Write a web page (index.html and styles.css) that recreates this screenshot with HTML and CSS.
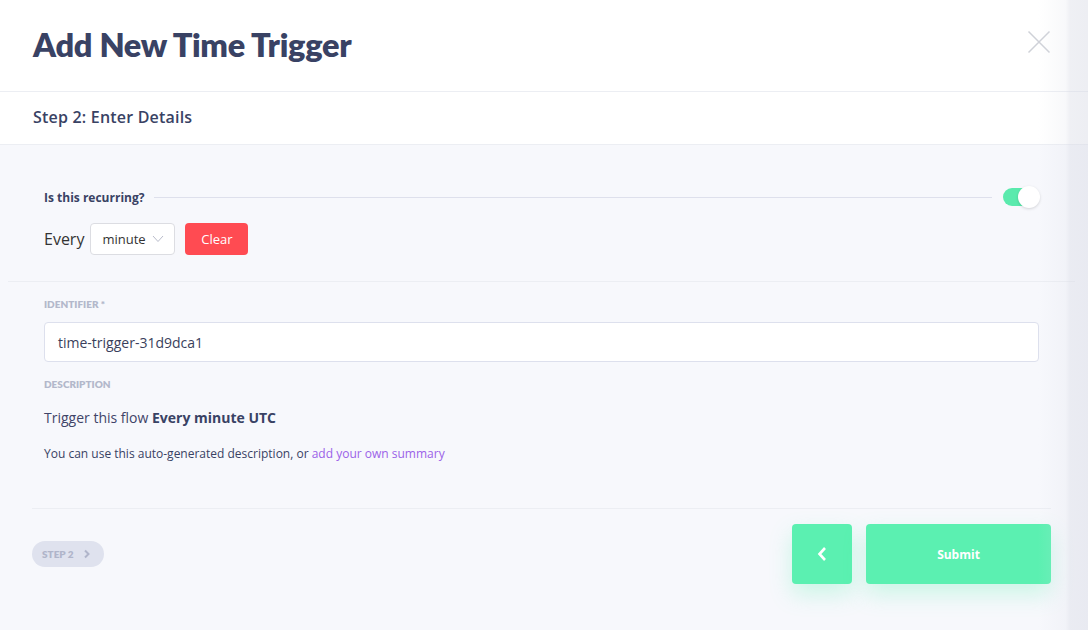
FILE: index.html
```html
<!DOCTYPE html>
<html>
<head>
<meta charset="utf-8">
<link rel="stylesheet" href="styles.css">
</head>
<body>
<div class="modal">
  <header class="modal-header">
    <h1 class="title">Add New Time Trigger</h1>
    <button class="close" aria-label="Close">
      <svg width="24" height="24" viewBox="0 0 24 24"><path d="M1.5 1.5 L22.5 22.5 M22.5 1.5 L1.5 22.5" stroke="#cfd1d8" stroke-width="1.5" fill="none"/></svg>
    </button>
  </header>
  <div class="step-header">Step 2: Enter Details</div>
  <div class="modal-body">
    <section class="recurring">
      <div class="recurring-row">
        <span class="recurring-label">Is this recurring?</span>
        <span class="rule"></span>
        <span class="toggle"><span class="knob"></span></span>
      </div>
      <div class="every-row">
        <span class="every">Every</span>
        <div class="select">minute
          <svg width="12" height="8" viewBox="0 0 12 8"><path d="M1 1 L6 6.5 L11 1" stroke="#b9bccb" stroke-width="1" fill="none"/></svg>
        </div>
        <button class="clear">Clear</button>
      </div>
    </section>
    <section class="fields">
      <label class="field-label">Identifier *</label>
      <div class="input">time-trigger-31d9dca1</div>
      <label class="field-label desc-label">Description</label>
      <p class="desc">Trigger this flow <strong>Every minute UTC</strong></p>
      <p class="hint">You can use this auto-generated description, or <a href="#">add your own summary</a></p>
    </section>
    <footer class="footer">
      <span class="step-pill">STEP 2
        <svg width="8" height="10" viewBox="0 0 8 10"><path d="M2 1.5 L5.5 5 L2 8.5" stroke="#b0b5ca" stroke-width="2" fill="none"/></svg>
      </span>
      <div class="actions">
        <button class="btn back">
          <svg width="12" height="16" viewBox="0 0 12 16"><path d="M9 2 L3.5 8 L9 14" stroke="#fff" stroke-width="2.6" fill="none"/></svg>
        </button>
        <button class="btn submit">Submit</button>
      </div>
    </footer>
  </div>
</div>
</body>
</html>
```
FILE: styles.css
```css
* { box-sizing: border-box; }
html, body { margin: 0; padding: 0; }
body {
  width: 1088px;
  height: 630px;
  overflow: hidden;
  background: #f7f8fc;
  font-family: "Open Sans", sans-serif;
  color: #394264;
  position: relative;
}
body::after {
  content: "";
  position: absolute;
  top: 0; right: 0;
  width: 50px;
  height: 630px;
  background: linear-gradient(to right, rgba(220,222,232,0) 0%, rgba(220,222,232,0.2) 55%, rgba(215,217,228,0.4) 64%, rgba(215,217,228,0.45) 100%);
  pointer-events: none;
}
.modal { display: flex; flex-direction: column; height: 630px; }
.modal-header {
  background: #fff;
  height: 92px;
  border-bottom: 1px solid #eceef3;
  display: flex;
  align-items: center;
  justify-content: space-between;
  padding: 0 37px 0 33px;
}
.title {
  margin: 0;
  font-family: "Lato", sans-serif;
  font-weight: 800;
  font-size: 32.5px;
  letter-spacing: -0.3px;
  color: #394264;
  padding-bottom: 2px;
}
.close {
  background: none; border: 0; padding: 0; width: 24px; height: 24px;
  margin-bottom: 7px;
  display: flex;
}
.step-header {
  background: #fff;
  height: 53px;
  border-bottom: 1px solid #eceef3;
  padding: 0 33px 2px;
  display: flex;
  align-items: center;
  font-size: 16px;
  font-weight: 600;
  letter-spacing: 0.2px;
  color: #394264;
}
.modal-body { flex: 1; display: flex; flex-direction: column; }
.recurring {
  margin: 0 13px 0 8px;
  padding: 41px 36px 26px 36px;
  border-bottom: 1px solid #eceef3;
}
.recurring-row { display: flex; align-items: center; height: 22px; }
.recurring-label { font-size: 12px; font-weight: 700; color: #394264; white-space: nowrap; }
.rule { flex: 1; height: 1px; background: #dee0ec; margin: 0 11px 0 10px; }
.toggle {
  width: 36px; height: 18px; border-radius: 9px; background: #5aeaad;
  position: relative; display: block;
}
.knob {
  position: absolute; right: -1px; top: -2px;
  width: 22px; height: 22px; border-radius: 50%;
  background: #fff; box-shadow: 0 1px 3px rgba(0,0,0,0.15);
}
.every-row { display: flex; align-items: center; margin-top: 15px; }
.every { font-size: 16px; color: #333; margin-right: 6px; }
.select {
  height: 32px; width: 85px; background: #fff;
  border: 1px solid #dcdde2; border-radius: 4px;
  display: flex; align-items: center; justify-content: space-between;
  padding: 0 10px 0 11px;
  font-size: 13px; color: #333;
}
.clear {
  margin-left: 10px; height: 32px; width: 63px;
  background: #ff4b52; color: #fff; border: 0; border-radius: 4px;
  font-family: "Open Sans", sans-serif; font-size: 13px;
}
.fields { padding: 16px 49px 0 44px; }
.field-label {
  display: block;
  font-family: "Lato", sans-serif;
  font-size: 10px; font-weight: 800; text-transform: uppercase;
  color: #b3b8cb; height: 12px; line-height: 12px;
}
.input {
  margin-top: 12px;
  height: 40px; background: #fff;
  border: 1px solid #dde0ed; border-radius: 4px;
  padding: 0 13px; display: flex; align-items: center;
  font-size: 14px; color: #3a3f5c;
}
.desc-label { margin-top: 16px; }
.desc { margin: 18px 0 0; font-size: 14px; line-height: 20px; color: #3f4468; }
.desc strong { font-weight: 700; color: #394264; }
.hint { margin: 18px 0 0; font-size: 12px; line-height: 16px; color: #394264; }
.hint a { color: #9b62e8; text-decoration: none; }
.footer {
  margin: 46px 37px 0 32px;
  border-top: 1px solid #eceef3;
  padding-top: 15px;
  display: flex; justify-content: space-between; align-items: flex-start;
}
.step-pill {
  margin-top: 17px;
  height: 26px; width: 72px; border-radius: 13px;
  background: #dfe2ee; color: #b0b5ca;
  font-family: "Lato", sans-serif; font-size: 10px; font-weight: 800;
  display: flex; align-items: center; padding-left: 10px; gap: 9px;
}
.actions { display: flex; gap: 14px; }
.btn {
  height: 60px; border: 0; border-radius: 4px;
  background: #5bf0b1; color: #fff;
  box-shadow: 0 10px 22px rgba(91,240,177,0.28);
  display: flex; align-items: center; justify-content: center;
}
.back { width: 60px; }
.submit { width: 185px; font-family: "Open Sans", sans-serif; font-size: 12px; font-weight: 700; }
```
